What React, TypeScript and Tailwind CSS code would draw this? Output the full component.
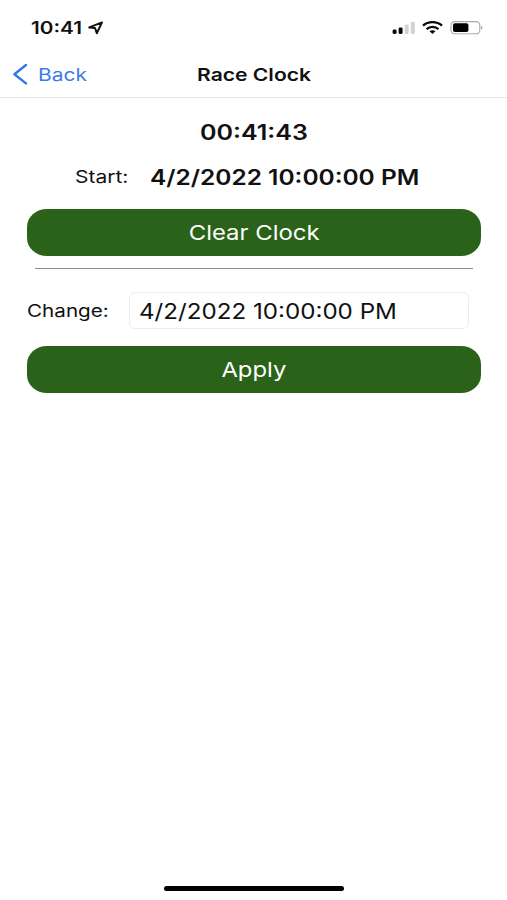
import { FC, ReactNode } from "react";

// Wide text: the glyphs are stretched sideways from the left edge of their box
const Wide: FC<{ className: string; children: ReactNode }> = ({
  className,
  children,
}) => (
  <span className={`block origin-left whitespace-nowrap ${className}`}>
    {children}
  </span>
);

const StatusBar = () => {
  return (
    <div className="flex h-[50px] items-center pt-[5px] pl-[31px] pr-6">
      <div className="w-[52px] pt-px">
        <Wide className="scale-x-[1.22] text-[17px] font-semibold">10:41</Wide>
      </div>
      <svg className="ml-1 h-[14px] w-[17px]" viewBox="0 0 17 14" fill="none">
        <path
          d="M15 1.4L2.2 6.4L8 7L9.8 12.2Z"
          stroke="#111"
          strokeWidth="2"
          strokeLinejoin="round"
        />
      </svg>

      <svg className="ml-auto h-[14px] w-[23px]" viewBox="0 0 23 14">
        <rect x="0.6" y="8.6" width="4" height="4.4" rx="1.4" fill="#080808" />
        <rect x="6.6" y="6.6" width="4" height="6.4" rx="1.4" fill="#080808" />
        <rect x="12.7" y="3.6" width="4" height="9.4" rx="1.2" fill="#d2d2d2" />
        <rect x="18.8" y="0.8" width="4" height="12.2" rx="1.2" fill="#d2d2d2" />
      </svg>
      <svg
        className="ml-[7px] h-[14px] w-[21px]"
        viewBox="0 0 21 14"
        fill="none"
        stroke="#080808"
        strokeWidth="2.3"
      >
        <path d="M1 4.7C6.2 -0.1 14.8 -0.1 20 4.7" />
        <path d="M4.5 8.2C8 5.1 13 5.1 16.5 8.2" />
        <path
          d="M7.5 10.2C9.2 8.9 11.8 8.9 13.5 10.2L10.5 12.9Z"
          fill="#080808"
          stroke="none"
        />
      </svg>
      <svg className="ml-[7px] h-[14px] w-[33px]" viewBox="0 0 33 14">
        <rect
          x="1"
          y="0.6"
          width="28.8"
          height="12.2"
          rx="3.6"
          fill="none"
          stroke="#aaa"
          strokeWidth="1.1"
        />
        <rect x="3" y="2.3" width="15.4" height="8.8" rx="1.8" fill="#000" />
        <path d="M31.1 5C32.9 5.6 32.9 8 31.1 8.6Z" fill="#999" />
      </svg>
    </div>
  );
};

const NavBar = () => {
  return (
    <div className="flex h-12 items-center border-b border-[#e9e9e9] pl-3">
      <svg className="h-[22px] w-4" viewBox="0 0 16 22" fill="none">
        <path
          d="M14 2L2.4 11.2L14 20.4"
          stroke="#2f78ee"
          strokeWidth="2.4"
          strokeLinecap="round"
          strokeLinejoin="round"
        />
      </svg>
      <div className="ml-[10px] w-[159px] pt-[2px] text-[#3b7de8]">
        <Wide className="scale-x-[1.2] text-[17.5px]">Back</Wide>
      </div>
      <Wide className="scale-x-[1.205] pt-[2px] text-[17.5px] font-semibold">
        Race Clock
      </Wide>
    </div>
  );
};

const GreenButton: FC<{ children: ReactNode }> = ({ children }) => (
  <button className="flex h-[46.5px] w-[454px] items-center justify-center rounded-[20px/18px] bg-[#296218] pt-[2px] text-white">
    <span className="scale-x-[1.165] text-[20.5px]">{children}</span>
  </button>
);

export default function App() {
  return (
    <div className="flex h-[900px] w-[507px] flex-col bg-white font-['Inter',sans-serif] leading-none text-[#111]">
      <StatusBar />
      <NavBar />

      <main className="flex flex-1 flex-col px-[27px] pt-[11px]">
        <div className="flex h-[46px] items-center pl-[173px]">
          <Wide className="scale-x-[1.19] text-[21px] font-semibold">
            00:41:43
          </Wide>
        </div>

        <div className="flex h-[44px] items-center pl-12">
          <div className="w-[75px]">
            <Wide className="scale-x-[1.2] text-[17.5px]">Start:</Wide>
          </div>
          <Wide className="scale-x-[1.165] text-[21px] font-semibold">
            4/2/2022 10:00:00 PM
          </Wide>
        </div>

        <div className="mt-[10px]">
          <GreenButton>Clear Clock</GreenButton>
        </div>
        <div className="mx-2 mt-[12.5px] h-px w-[438px] bg-[#8e8e8e]" />

        <div className="mt-[23px] flex h-[37px] items-center">
          <div className="w-[102px]">
            <Wide className="scale-x-[1.18] text-[17.5px]">Change:</Wide>
          </div>
          <div className="flex h-[37px] w-[340px] items-center rounded-md border border-[#ececec] pt-px pl-[9px]">
            <Wide className="scale-x-[1.15] text-[21px]">
              4/2/2022 10:00:00 PM
            </Wide>
          </div>
        </div>

        <div className="mt-[17px]">
          <GreenButton>Apply</GreenButton>
        </div>
      </main>

      <div className="ml-[164px] mb-[9px] h-[5px] w-[180px] rounded-full bg-black" />
    </div>
  );
}
